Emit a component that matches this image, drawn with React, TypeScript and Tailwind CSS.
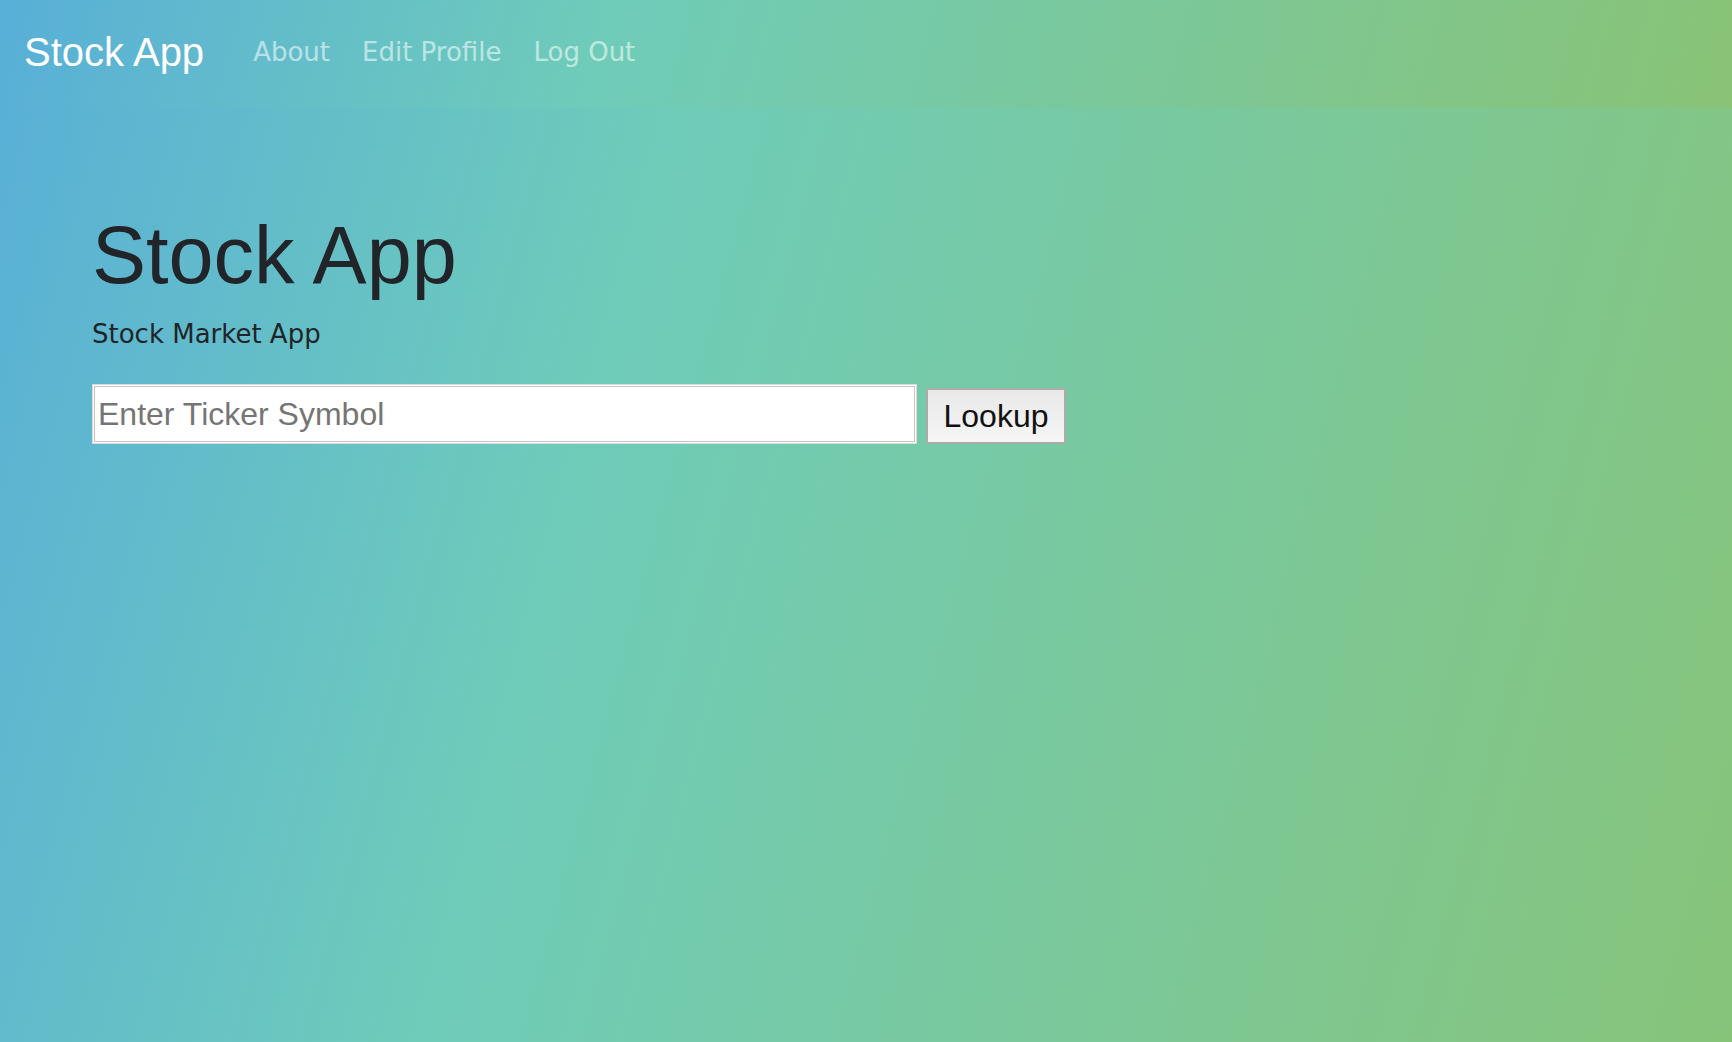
import React, { useState } from 'react';

const navLinks = ['About', 'Edit Profile', 'Log Out'];

export default function App() {
    const [ticker, setTicker] = useState('');

    return (
        <div className="min-h-screen bg-[linear-gradient(105deg,#58afd8_0%,#6fccb9_35%,#87c47a_100%)] font-['DejaVu_Sans',sans-serif]">
            {/* Navbar */}
            <nav className="h-[108px] flex items-center pl-[24px] pb-[5px] bg-[linear-gradient(105deg,#58afd8_0%,#6fccb9_35%,#89c376_100%)]">
                <a href="#" className="mr-[33px] text-[40px] leading-[48px] text-white font-['Liberation_Sans',Arial,sans-serif]">
                    Stock App
                </a>
                <ul className="flex items-center">
                    {navLinks.map((link) => (
                        <li key={link}>
                            <a href="#" className="block px-4 text-[26px] leading-[30px] text-white/55 hover:text-white/80">
                                {link}
                            </a>
                        </li>
                    ))}
                </ul>
            </nav>

            {/* Jumbotron */}
            <main className="pl-[92px] pt-[99px]">
                <h1 className="text-[81px] leading-[96px] font-normal text-[#212529] font-['Liberation_Sans',Arial,sans-serif]">
                    Stock App
                </h1>
                <p className="mt-3 text-[26px] leading-[39px] text-[#212529]">Stock Market App</p>

                <form className="mt-[30px] flex items-end" onSubmit={(e) => e.preventDefault()}>
                    <input
                        type="text"
                        value={ticker}
                        onChange={(e) => setTicker(e.target.value)}
                        placeholder="Enter Ticker Symbol"
                        className="w-[825px] h-[60px] pl-[5px] bg-white border border-[#dadada] shadow-[inset_0_0_0_1px_#ffffff,inset_0_0_0_2px_#c4c4c4] text-[32px] text-[#222] placeholder:text-[#757575] outline-none font-['Liberation_Sans',Arial,sans-serif]"
                    />
                    <button
                        type="submit"
                        className="ml-[9px] w-[140px] h-[56px] flex items-center justify-center border-2 border-[#ababab] bg-[linear-gradient(180deg,#e8e8e8,#f6f6f6)] text-[32px] text-[#111] font-['Liberation_Sans',Arial,sans-serif]"
                    >
                        Lookup
                    </button>
                </form>
            </main>
        </div>
    );
}
